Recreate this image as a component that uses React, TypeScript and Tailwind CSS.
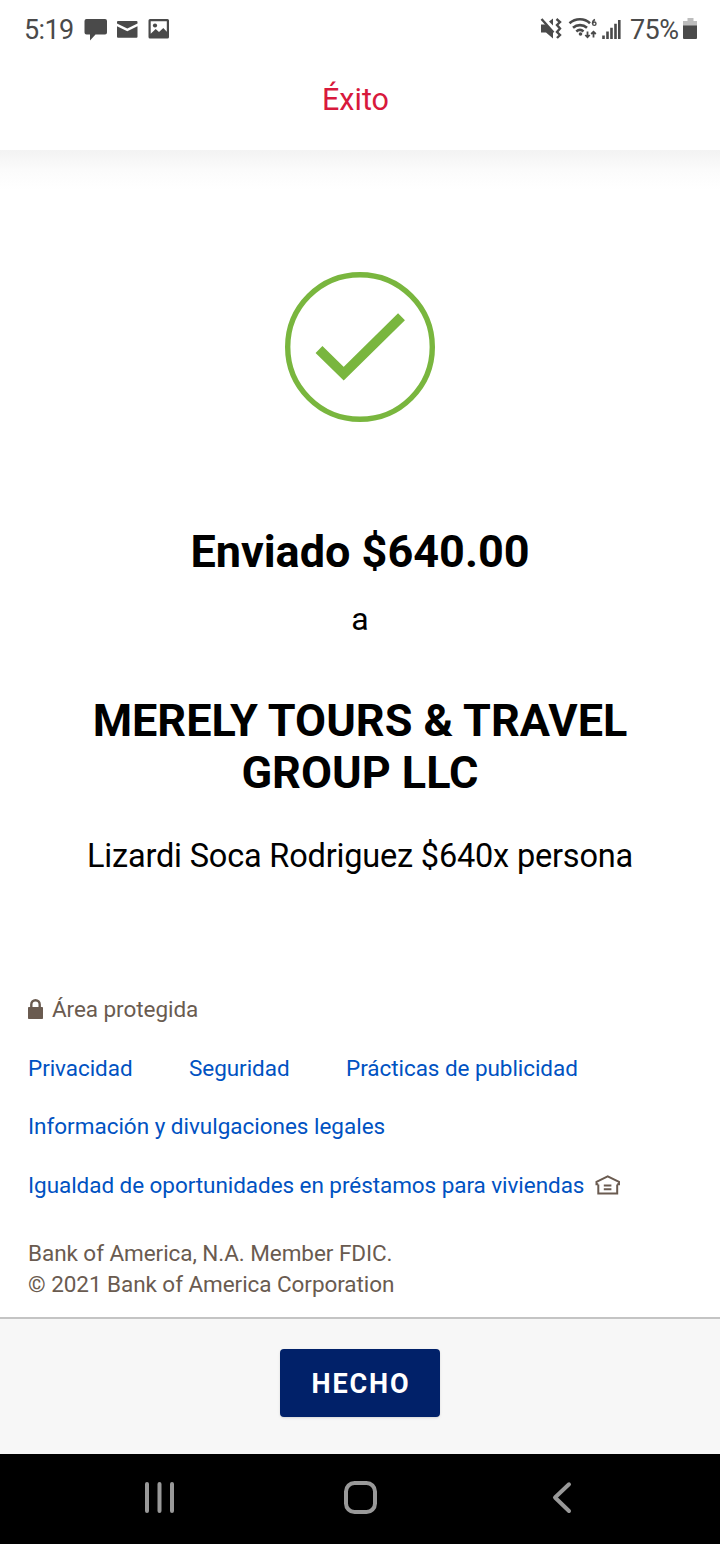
import React from 'react';

const LINK = 'text-[#0052c2]';

function StatusBar() {
  return (
    <div className="h-[58px] pl-6 pr-[22px] flex items-center justify-between text-[#4a4a4a] text-[27px]">
      <div className="flex items-center">
        <span className="w-[60px] pt-[2px] tracking-[-0.6px]">5:19</span>
        {/* Message, mail and gallery notifications */}
        <svg className="w-[86px] h-6" viewBox="84 16 86 24" fill="currentColor">
          <path d="M86.5 18h18.500q2 0 2 2v11.500q0 2-2 2h-9.500l-5.500 6v-6h-3.500q-2 0-2-2v-11.500q0-2 2-2z" />
          <path d="M118 20h18.500q1 0 1 1v1.500l-10.200 5-10.300-5v-1.500q0-1 1-1z" />
          <path d="M117 25.300l10.300 5 10.200-5v10.400q0 1-1 1h-18.500q-1 0-1-1z" />
          <path fillRule="evenodd" d="M150 18h17.500q1.500 0 1.500 1.500v16.500q0 1.500-1.500 1.500h-17.500q-1.500 0-1.500-1.500v-16.500q0-1.500 1.500-1.500zM150.700 20.200v12.500l5-4.600 3.300 3 4.300-4 3.500 3.600v-10.500z" />
          <circle cx="155" cy="24.500" r="2.100" />
        </svg>
      </div>
      <div className="flex items-center">
        {/* Mute, wifi and signal strength */}
        <svg className="w-[90px] h-6" viewBox="538 16 90 24" fill="none" stroke="currentColor">
          <path fill="currentColor" stroke="none" d="M541 23.500h4l8 6v8l-7-6h-5zM549 20.500l4-3v7z" />
          <path strokeWidth="2.400" d="M541.500 18l12 13.500" />
          <path strokeWidth="2.400" d="M556.500 18l3.500 3-3 3 3 3.500-3 3.500 3 3-3 3" />
          <path strokeWidth="2.600" d="M569.500 22.200c6-5.300 15-5.300 20.500 0M573 26.700c4-3.500 10-3.500 14 0M576.300 30.500c2.300-2 5-2 7.200 0" />
          <circle cx="580.500" cy="33" r="1.800" fill="currentColor" stroke="none" />
          <path strokeWidth="1.500" d="M595 18.500q-2.500 1-2.500 4.200" />
          <circle cx="594.300" cy="22.700" r="1.700" strokeWidth="1.400" />
          <path strokeWidth="1.800" d="M587.500 30.500v6M585.300 34l2.200 2.300 2.200-2.300M593.500 36.500v-6M591.200 33l2.300-2.300 2.300 2.300" />
          <path strokeWidth="2.600" d="M603.500 34.500v3.500M607.500 30.500v7.500M611.500 26.700v11.300M615.500 22.700v15.300M619.300 19v19" />
        </svg>
        <span className="w-[55px] pl-[2px] pt-[2px] tracking-[-0.6px]">75%</span>
        <svg className="w-[15px] h-6" viewBox="683 16 15 24">
          <path d="M687.500 17h6v3h3.500v5h-14v-5h4.500z" fill="#bdbdbd" />
          <path d="M683 24.500h14v12.500q0 1-1 1h-12q-1 0-1-1z" fill="currentColor" />
        </svg>
      </div>
    </div>
  );
}

function SuccessMark() {
  return (
    <svg className="w-[150px] h-[150px]" viewBox="0 0 150 150" fill="none" stroke="#79b63e">
      <circle cx="75" cy="75" r="72.300" strokeWidth="5.400" />
      <path d="M34 77.500L58.700 101.700L116.500 44.700" strokeWidth="9.800" />
    </svg>
  );
}

function LegalFooter() {
  return (
    <footer className="px-7 text-[22.500px] tracking-[-0.06px] text-[#6a5b50]">
      <div className="h-[58px] flex items-center">
        <svg className="w-[15px] h-5 mr-[9px] -mt-[2px]" viewBox="0 0 15 20">
          <path d="M3.300 9V5.400a4.200 4.200 0 0 1 8.400 0V9" fill="none" stroke="currentColor" strokeWidth="2.400" />
          <rect y="8" width="15" height="12" rx="0.800" fill="currentColor" />
        </svg>
        Área protegida
      </div>
      <nav>
        <div className={`h-[59px] flex items-center gap-[56.500px] ${LINK}`}>
          <a>Privacidad</a>
          <a>Seguridad</a>
          <a>Prácticas de publicidad</a>
        </div>
        <div className={`h-[58px] flex items-center tracking-[-0.02px] ${LINK}`}>
          <a>Información y divulgaciones legales</a>
        </div>
        <div className="h-[59px] flex items-center gap-[11px]">
          <a className={LINK}>Igualdad de oportunidades en préstamos para viviendas</a>
          <svg className="w-[26px] h-5 -mt-[2px]" viewBox="0 0 26 20" fill="none" stroke="currentColor" strokeWidth="2">
            <path d="M3.300 9.500v8.900h18.900v-8.900M3.300 9.300H1.500V6.800L12.700 1.300l11.300 5.500V9.300h-1.900M8.800 10.400h7.600M8.800 14.200h7.600" />
          </svg>
        </div>
      </nav>
      <p className="mt-[23px] leading-[30.500px]">
        Bank of America, N.A. Member FDIC.
        <br />© 2021 Bank of America Corporation
      </p>
    </footer>
  );
}

function NavigationBar() {
  return (
    <div className="h-[90px] bg-black">
      <svg className="w-full h-full" viewBox="0 1454 720 90" fill="none" stroke="#999999" strokeWidth="4" strokeLinecap="round">
        <path d="M147 1484v27M159.500 1484v27M172 1484v27" />
        <rect x="346" y="1483" width="29" height="29" rx="8.500" />
        <path d="M569 1484.300L555 1497.500L569 1511" strokeLinejoin="round" />
      </svg>
    </div>
  );
}

export default function App() {
  return (
    <div className="w-[720px] h-[1544px] flex flex-col bg-white overflow-hidden font-['Roboto',sans-serif]">
      <header className="h-[150px]">
        <StatusBar />
        <h1 className="h-[82px] pt-px pr-[9px] text-center text-[30.500px] leading-[82px] text-[#d8193c]">Éxito</h1>
      </header>

      <main className="flex-1 flex flex-col text-black">
        <div className="h-[40px] shrink-0 bg-gradient-to-b from-[#f3f3f3] via-[#fbfbfb] to-white" />
        <section className="mt-[82px] flex flex-col items-center text-center">
          <SuccessMark />
          <h2 className="mt-[104px] text-[45px] leading-[52px] font-bold">Enviado $640.00</h2>
          <p className="mt-[21px] text-[32px] leading-10">a</p>
          <h2 className="mt-14 text-[45px] leading-[52px] font-bold">
            MERELY TOURS &amp; TRAVEL
            <br />
            GROUP LLC
          </h2>
          <p className="mt-[37px] text-[32.500px] tracking-[-0.19px] leading-10">Lizardi Soca Rodriguez $640x persona</p>
        </section>
        <div className="mt-[105px]">
          <LegalFooter />
        </div>
      </main>

      <div className="h-[137px] border-t-2 border-[#c4c4c4] bg-[#f7f7f7] flex justify-center pt-[29.500px]">
        <button className="w-40 h-[68px] rounded bg-[#012169] pt-1 pl-[2px] text-white text-[27px] font-bold tracking-[1.900px] shadow-sm">
          HECHO
        </button>
      </div>
      <NavigationBar />
    </div>
  );
}
